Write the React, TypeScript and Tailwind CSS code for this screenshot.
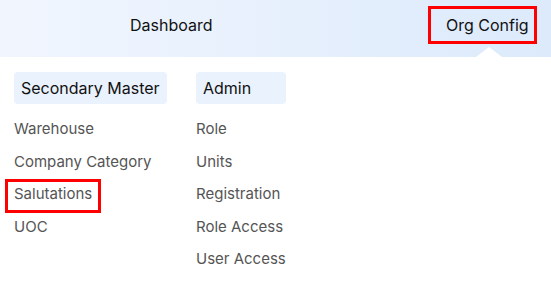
import React from 'react';

const secondary = ['Warehouse', 'Company Category', 'Salutations', 'UOC'];
const admin = ['Role', 'Units', 'Registration', 'Role Access', 'User Access'];

export default function App() {
  return (
    <div className="w-[551px] h-[288px] bg-white font-['Inter',sans-serif] overflow-hidden">
      {/* TOP NAV */}
      <header className="relative h-[57px] flex items-center pb-[8px] bg-gradient-to-r from-[#f1f6fe] to-[#dceafb]">
        <span className="ml-[130px] text-[16px] text-[#111]">Dashboard</span>
        <div className="relative ml-auto mr-[14px] w-[109px] h-[38px] border-[3px] border-[#f00] flex items-center pl-[15px]">
          <span className="text-[16px] text-[#111]">Org Config</span>
        </div>
        <div className="absolute left-[476px] bottom-0 w-0 h-0 border-l-[13.5px] border-r-[13.5px] border-b-[10px] border-l-transparent border-r-transparent border-b-white"></div>
      </header>

      {/* MEGA MENU */}
      <div className="flex pl-[14px] pt-[15px]">
        <div className="w-[182px]">
          <div className="inline-flex items-center h-[32px] px-[7px] rounded bg-[#eaf2fd] text-[16px] text-[#111] mb-[9px]">Secondary Master</div>
          <ul>
            {secondary.map(s => (
              <li key={s} className="relative h-[32.5px] flex items-center text-[15px] text-[#555]">
                {s}
                {s === 'Salutations' && (
                  <div className="absolute -left-[9px] top-[0.5px] w-[96px] h-[34px] border-[3px] border-[#f00]"></div>
                )}
              </li>
            ))}
          </ul>
        </div>
        <div>
          <div className="inline-flex items-center h-[32px] w-[90px] px-[7px] rounded bg-[#eaf2fd] text-[16px] text-[#111] mb-[9px]">Admin</div>
          <ul>
            {admin.map(a => (
              <li key={a} className="h-[32.5px] flex items-center text-[15px] text-[#555]">{a}</li>
            ))}
          </ul>
        </div>
      </div>
    </div>
  );
}
